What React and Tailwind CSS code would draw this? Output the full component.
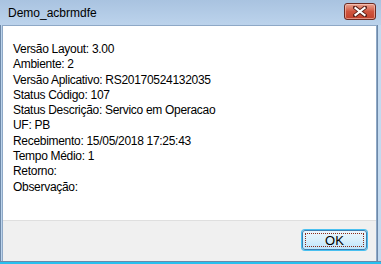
const LINES = [
  "Versão Layout: 3.00",
  "Ambiente: 2",
  "Versão Aplicativo: RS20170524132035",
  "Status Código: 107",
  "Status Descrição: Servico em Operacao",
  "UF: PB",
  "Recebimento: 15/05/2018 17:25:43",
  "Tempo Médio: 1",
  "Retorno:",
  "Observação:",
];

function CloseButton() {
  return (
    <div className="flex h-[17px] w-[32px] items-center justify-center rounded-[3px] border border-[#6b2a22] bg-gradient-to-b from-[#e8a493] via-[#d0553f] to-[#c2412c] shadow-[inset_0_0_0_1px_rgba(255,220,210,0.5)]">
      <svg width="14" height="11" viewBox="0 0 14 11">
        <path d="M2 1.5 L12 9.5 M12 1.5 L2 9.5" stroke="#5a2019" strokeWidth="4" strokeLinecap="square" />
        <path d="M2.5 2 L11.5 9 M11.5 2 L2.5 9" stroke="#ffffff" strokeWidth="2.2" strokeLinecap="square" />
      </svg>
    </div>
  );
}

export default function App() {
  return (
    <div
      className="flex h-[264px] w-[381px] flex-col overflow-hidden bg-[#bcd4ec]"
      style={{ fontFamily: "'Liberation Sans', Arial, sans-serif" }}
    >
      <div className="flex h-[25px] shrink-0 items-center justify-between bg-gradient-to-b from-[#a9c3e0] to-[#bcd3ec] pl-[8px] pr-[5px]">
        <span className="text-[12px] leading-none text-black">Demo_acbrmdfe</span>
        <div className="-mt-[3px]">
          <CloseButton />
        </div>
      </div>
      <div className="flex min-h-0 flex-1">
        <div className="w-[2px] shrink-0 border-l border-[#6d88a8] bg-[#bcd4ec]" />
        <div className="flex min-w-0 flex-1 flex-col border border-b-0 border-[#8ea8c6]">
          <div className="flex-1 bg-white pl-[10px] pt-[16px] text-[12px] leading-[15.3px] tracking-[-0.3px] text-black">
            {LINES.map((l) => (
              <div key={l}>{l}</div>
            ))}
          </div>
          <div className="flex h-[41px] shrink-0 items-start justify-end border-t border-[#dfdfdf] bg-[#f0f0f0] pr-[9px] pt-[9px]">
            <button className="flex h-[20px] w-[65px] items-center justify-center rounded-[3px] border border-[#3c7fb1] bg-gradient-to-b from-[#eaf6fd] via-[#d9f0fc] to-[#bee6fd] p-[2px] shadow-[0_0_0_1px_#49c0f0]">
              <span className="flex h-full w-full items-center justify-center border border-dotted border-[#8b2a1a] text-[13px] leading-none text-black">
                OK
              </span>
            </button>
          </div>
        </div>
        <div className="w-[4px] shrink-0 border-l border-[#6d88a8] bg-[#c3daf0]" />
      </div>
      <div className="h-[3px] shrink-0 border-t border-[#6d88a8] bg-[#28c0f0]" />
    </div>
  );
}
